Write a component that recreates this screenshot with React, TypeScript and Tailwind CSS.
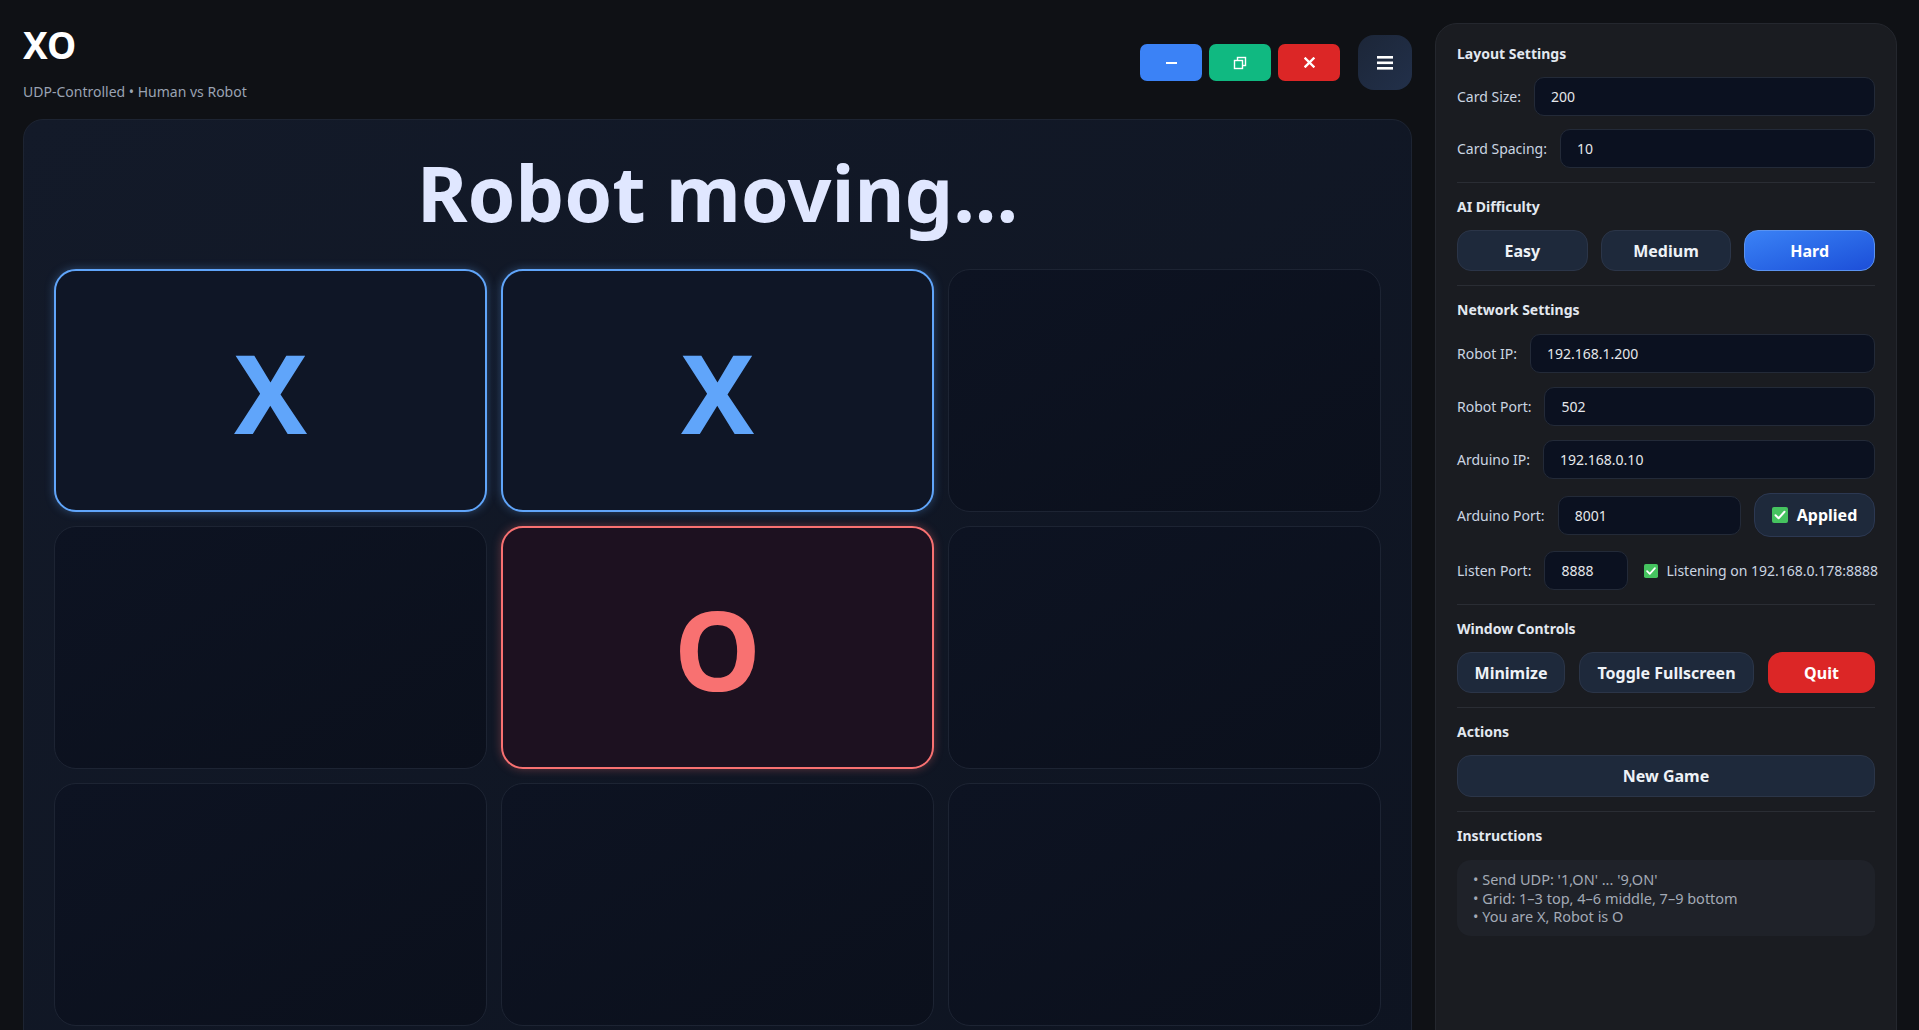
type Mark = "X" | "O" | null;

const board: Mark[] = ["X", "X", null, null, "O", null, null, null, null];

function GreenCheck({ size = 16 }: { size?: number }) {
  return (
    <svg width={size} height={size} viewBox="0 0 16 16">
      <rect x="0" y="0" width="16" height="16" rx="2" fill="#45c35f" />
      <path d="M3.5 8.2 L6.6 11.2 L12.5 4.8" fill="none" stroke="#fff" strokeWidth="2" strokeLinecap="round" strokeLinejoin="round" />
    </svg>
  );
}

function Cell({ mark }: { mark: Mark }) {
  if (mark === "X") {
    return (
      <div className="flex h-[243px] items-center justify-center rounded-[22px] border-2 border-[#60a5fa] bg-[#0f1626] shadow-[0_0_10px_rgba(96,165,250,0.35)]">
        <span className="text-[110px] font-bold leading-none text-[#60a5fa]">X</span>
      </div>
    );
  }
  if (mark === "O") {
    return (
      <div className="flex h-[243px] items-center justify-center rounded-[22px] border-2 border-[#f87171] bg-[#1d1120] shadow-[0_0_10px_rgba(248,113,113,0.35)]">
        <span className="text-[110px] font-bold leading-none text-[#f87171]">O</span>
      </div>
    );
  }
  return (
    <div className="h-[243px] rounded-[22px] border border-[#1d2433] bg-gradient-to-br from-[#0d1322] to-[#0b101c]" />
  );
}

function Field({ label, value }: { label: string; value: string }) {
  return (
    <div className="flex items-center gap-[13px]">
      <span className="whitespace-nowrap text-[14px] text-[#cbd5e1]">{label}</span>
      <input
        defaultValue={value}
        className="h-[39px] min-w-0 flex-1 rounded-[10px] border border-[#232a38] bg-[#0b1120] px-4 text-[14px] text-[#e5e7eb] outline-none"
      />
    </div>
  );
}

function Heading({ children }: { children: string }) {
  return <h3 className="text-[14px] font-bold leading-5 text-[#e2e8f0]">{children}</h3>;
}

const darkBtn =
  "flex h-[41px] items-center justify-center rounded-[14px] border border-[#2b3548] bg-[#1e293b] text-[16px] font-bold text-[#eef2f7]";

function Sidebar() {
  return (
    <aside className="h-[1060px] w-[462px] shrink-0 rounded-[22px] border border-[#24272e] bg-[#1a1c21] px-[21px] pt-[20px]">
      <section className="flex flex-col gap-[13px] border-b border-[#2a2d34] pb-[14px]">
        <Heading>Layout Settings</Heading>
        <Field label="Card Size:" value="200" />
        <Field label="Card Spacing:" value="10" />
      </section>

      <section className="flex flex-col gap-[13px] border-b border-[#2a2d34] py-[14px]">
        <Heading>AI Difficulty</Heading>
        <div className="grid grid-cols-3 gap-[13px]">
          <button className={darkBtn}>Easy</button>
          <button className={darkBtn}>Medium</button>
          <button className="flex h-[41px] items-center justify-center rounded-[14px] border border-[#5b93f0] bg-gradient-to-br from-[#3b82f6] to-[#1d4ed8] text-[16px] font-bold text-white">
            Hard
          </button>
        </div>
      </section>

      <section className="flex flex-col gap-[14px] border-b border-[#2a2d34] py-[14px]">
        <Heading>Network Settings</Heading>
        <Field label="Robot IP:" value="192.168.1.200" />
        <Field label="Robot Port:" value="502" />
        <Field label="Arduino IP:" value="192.168.0.10" />
        <div className="flex items-center gap-[13px]">
          <span className="whitespace-nowrap text-[14px] text-[#cbd5e1]">Arduino Port:</span>
          <input
            defaultValue="8001"
            className="h-[39px] min-w-0 flex-1 rounded-[10px] border border-[#232a38] bg-[#0b1120] px-4 text-[14px] text-[#e5e7eb] outline-none"
          />
          <button className="flex h-[44px] w-[121px] items-center justify-center gap-[9px] rounded-[16px] border border-[#2c3852] bg-[#1e293b] text-[16px] font-bold text-white">
            <GreenCheck />
            Applied
          </button>
        </div>
        <div className="flex items-center gap-[13px]">
          <span className="whitespace-nowrap text-[14px] text-[#cbd5e1]">Listen Port:</span>
          <input
            defaultValue="8888"
            className="h-[39px] w-[84px] rounded-[10px] border border-[#232a38] bg-[#0b1120] px-4 text-[14px] text-[#e5e7eb] outline-none"
          />
          <span className="ml-[3px] flex items-center gap-2 whitespace-nowrap text-[14px] text-[#cbd5e1]">
            <GreenCheck size={14} />
            Listening on 192.168.0.178:8888
          </span>
        </div>
      </section>

      <section className="flex flex-col gap-[13px] border-b border-[#2a2d34] py-[14px]">
        <Heading>Window Controls</Heading>
        <div className="flex gap-[14px]">
          <button className={`${darkBtn} w-[108px]`}>Minimize</button>
          <button className={`${darkBtn} w-[175px]`}>Toggle Fullscreen</button>
          <button className="flex h-[41px] flex-1 items-center justify-center rounded-[14px] bg-[#dc2626] text-[16px] font-bold text-white">
            Quit
          </button>
        </div>
      </section>

      <section className="flex flex-col gap-[13px] border-b border-[#2a2d34] py-[14px]">
        <Heading>Actions</Heading>
        <button className={`${darkBtn} h-[42px] w-full`}>New Game</button>
      </section>

      <section className="flex flex-col gap-[14px] py-[14px]">
        <Heading>Instructions</Heading>
        <div className="rounded-[14px] bg-[#1f2229] px-4 py-[10px] text-[14.5px] leading-[18.5px] text-[#a3aab6]">
          <p>• Send UDP: '1,ON' ... '9,ON'</p>
          <p>• Grid: 1–3 top, 4–6 middle, 7–9 bottom</p>
          <p>• You are X, Robot is O</p>
        </div>
      </section>
    </aside>
  );
}

function Header() {
  return (
    <header className="mb-[17px] flex h-[79px] items-center justify-between">
      <div>
        <h1 className="text-[37px] font-bold leading-[43px] text-white">XO</h1>
        <p className="mt-4 text-[14px] leading-5 text-[#9aa3b2]">UDP-Controlled • Human vs Robot</p>
      </div>
      <div className="flex items-center">
        <div className="flex gap-[7px]">
          <button className="flex h-[37px] w-[62px] items-center justify-center rounded-[7px] bg-[#3b82f6]">
            <svg width="11" height="2" viewBox="0 0 11 2">
              <rect width="11" height="2" fill="#fff" />
            </svg>
          </button>
          <button className="flex h-[37px] w-[62px] items-center justify-center rounded-[7px] bg-[#10b981]">
            <svg width="14" height="14" viewBox="0 0 14 14">
              <rect x="4.5" y="1.5" width="8" height="8" fill="none" stroke="#fff" strokeWidth="1.4" />
              <rect x="1.5" y="4.5" width="8" height="8" fill="#10b981" stroke="#fff" strokeWidth="1.4" />
            </svg>
          </button>
          <button className="flex h-[37px] w-[62px] items-center justify-center rounded-[7px] bg-[#dc2626]">
            <svg width="11" height="11" viewBox="0 0 11 11">
              <path d="M1.5 1.5 L9.5 9.5 M9.5 1.5 L1.5 9.5" stroke="#fff" strokeWidth="2.4" strokeLinecap="square" />
            </svg>
          </button>
        </div>
        <button className="ml-[18px] flex h-[55px] w-[54px] items-center justify-center rounded-[16px] bg-gradient-to-br from-[#1c2638] to-[#22304a]">
          <svg width="16" height="15" viewBox="0 0 16 15">
            <rect y="1" width="16" height="2.6" fill="#fff" />
            <rect y="6.5" width="16" height="2.6" fill="#fff" />
            <rect y="12" width="16" height="2.6" fill="#fff" />
          </svg>
        </button>
      </div>
    </header>
  );
}

export default function App() {
  return (
    <div className="flex h-screen w-full gap-[23px] overflow-hidden bg-[#0f1115] pl-[23px] pr-[22px] pt-[23px] font-['Noto_Sans','Open_Sans',sans-serif]">
      <main className="flex min-w-0 flex-1 flex-col">
        <Header />
        <div className="shrink-0 rounded-[20px] border border-[#1d2432] bg-gradient-to-br from-[#131a29] to-[#0e1421] px-[30px] pb-[30px] pt-[34px]">
          <h2 className="mb-[38px] text-center text-[77px] font-bold leading-none text-[#e0e7ff]">Robot moving...</h2>
          <div className="grid grid-cols-3 gap-[14px]">
            {board.map((m, i) => (
              <Cell key={i} mark={m} />
            ))}
          </div>
        </div>
      </main>
      <Sidebar />
    </div>
  );
}
